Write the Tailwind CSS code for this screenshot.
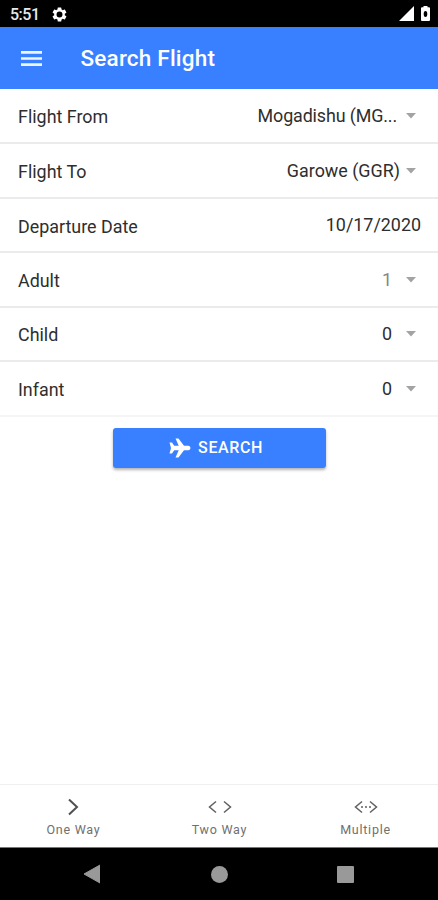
<!DOCTYPE html>
<html lang="en">
<head>
<meta charset="utf-8">
<title>Search Flight</title>
<script src="https://cdn.jsdelivr.net/npm/@tailwindcss/browser@4"></script>
</head>
<body class="bg-white font-['Roboto',sans-serif]">
<div class="flex h-[900px] w-[438px] flex-col overflow-hidden text-[#2e2e2e]">
  <div class="flex h-[27px] shrink-0 items-center bg-black pl-[10px] pr-[8px] text-white">
    <span class="w-[41px] pt-[2px] text-[16px] leading-none font-medium tracking-[-0.500px] text-[#e8e8e8]">5:51</span>
    <svg class="mt-px size-[17px]" viewBox="0 0 24 24" fill="#fff"><path d="M19.43 12.98c.04-.32.07-.64.07-.98s-.03-.66-.07-.98l2.11-1.65c.19-.15.24-.42.12-.64l-2-3.46c-.12-.22-.39-.3-.61-.22l-2.49 1c-.52-.4-1.08-.73-1.69-.98l-.38-2.65A.49.49 0 0 0 14 2h-4c-.25 0-.46.18-.49.42l-.38 2.65c-.61.25-1.17.59-1.69.98l-2.49-1c-.23-.09-.49 0-.61.22l-2 3.46c-.13.22-.07.49.12.64l2.11 1.65c-.04.32-.07.65-.07.98s.03.66.07.98l-2.11 1.65c-.19.15-.24.42-.12.64l2 3.46c.12.22.39.3.61.22l2.49-1c.52.4 1.08.73 1.69.98l.38 2.65c.03.24.24.42.49.42h4c.25 0 .46-.18.49-.42l.38-2.65c.61-.25 1.17-.59 1.69-.98l2.49 1c.23.09.49 0 .61-.22l2-3.46c.12-.22.07-.49-.12-.64l-2.11-1.65zM12 16.200a4.200 4.200 0 1 1 0-8.400 4.200 4.200 0 0 1 0 8.400z"/></svg>
    <svg class="ml-auto h-[15px] w-[15px]" viewBox="0 0 15 15" fill="#fff"><path d="M0 15 15 0v15z"/></svg>
    <svg class="ml-[7px] h-[15px] w-[9px]" viewBox="0 0 9 15" fill="#fff"><path fill-rule="evenodd" d="M2.500 0h4v1.300H8q1 0 1 1V14q0 1-1 1H1q-1 0-1-1V2.300q0-1 1-1h1.500zM4.500 5 Q2.700 5 2.700 8T4.500 11 6.300 8 4.500 5z"/></svg>
  </div>
  <header class="flex h-[62px] shrink-0 items-center bg-[#3880ff] pl-[21px]">
    <svg class="h-[15px] w-[21px]" viewBox="0 0 21 15" fill="#eef4ff"><path d="M0 0h21v2.700H0zM0 6.150h21v2.700H0zM0 12.300h21V15H0z"/></svg>
    <h1 class="ml-[38.500px] text-[22.500px] leading-none font-medium tracking-[0.200px] text-white">Search Flight</h1>
  </header>

  <main class="flex grow flex-col items-center">
    <div class="w-full divide-y-2 divide-[#ebebeb] border-b-2 border-[#f5f5f5] text-[17.900px] leading-none">
      <div class="flex h-[55px] items-center pr-[22px] pl-[18px]"><span class="pt-[2px]">Flight From</span><span class="ml-auto tracking-[-0.130px]">Mogadishu (MG...</span><svg class="ml-[9px] h-[6px] w-[10px]" viewBox="0 0 10 6" fill="#a3a3a3"><path d="M0 0h10L5 5.500z"/></svg></div>
      <div class="flex h-[55px] items-center pr-[22px] pl-[18px]"><span class="pt-[2px]">Flight To</span><span class="ml-auto">Garowe (GGR)</span><svg class="ml-[6px] h-[6px] w-[10px]" viewBox="0 0 10 6" fill="#a3a3a3"><path d="M0 0h10L5 5.500z"/></svg></div>
      <div class="flex h-[54px] items-center pr-[17px] pl-[18px]"><span class="pt-[3px]">Departure Date</span><span class="ml-auto">10/17/2020</span></div>
      <div class="flex h-[55px] items-center pr-[22px] pl-[18px]"><span class="pt-[2px]">Adult</span><span class="ml-auto text-[#858585]">1</span><svg class="ml-[14px] h-[6px] w-[10px]" viewBox="0 0 10 6" fill="#a3a3a3"><path d="M0 0h10L5 5.500z"/></svg></div>
      <div class="flex h-[54px] items-center pr-[22px] pl-[18px]"><span class="pt-[2px]">Child</span><span class="ml-auto">0</span><svg class="ml-[14px] h-[6px] w-[10px]" viewBox="0 0 10 6" fill="#a3a3a3"><path d="M0 0h10L5 5.500z"/></svg></div>
      <div class="flex h-[53px] items-center pr-[22px] pl-[18px]"><span class="pt-[3px]">Infant</span><span class="ml-auto pt-px">0</span><svg class="ml-[14px] h-[6px] w-[10px]" viewBox="0 0 10 6" fill="#a3a3a3"><path d="M0 0h10L5 5.500z"/></svg></div>
    </div>
    <button class="mt-[11px] ml-px flex h-[40px] w-[213px] items-center justify-center gap-[7px] rounded-[3px] bg-[#3880ff] pr-[7px] text-[16px] leading-none font-medium tracking-[0.600px] text-white shadow-[0_2px_3px_rgba(0,0,0,0.3)]">
      <svg class="size-[22px]" viewBox="0 0 22 22" fill="#fff"><path d="M.5 5.500h2.500L5.200 8.800h4.500L6.500 1.500h3L15 8.800H19.500Q21.500 9.300 21.500 11T19.500 13.200H15L9.500 20.500H6.500L9.700 13.200H5.200L3 16.500H.5L2 11z"/></svg>
      <span>SEARCH</span>
    </button>
  </main>

  <nav class="grid h-[63px] shrink-0 grid-cols-3 border-t border-[#efefef] pt-[12px] text-[12.500px] leading-none tracking-[0.750px] text-[#707070]">
    <div class="flex flex-col items-center gap-[7px]"><svg class="h-[20px] w-[26px]" viewBox="0 0 26 20" fill="none" stroke="#505050" stroke-width="2"><path d="M9 2.500 17 10l-8 7.500"/></svg><span class="pl-px">One Way</span></div>
    <div class="flex flex-col items-center gap-[7px]"><svg class="ml-px h-[20px] w-[26px]" viewBox="0 0 26 20" fill="none" stroke="#606060" stroke-width="1.500"><path d="M9 4.500 2.500 10 9 15.500M17 4.500l6.500 5.500-6.500 5.500"/></svg><span class="pl-px">Two Way</span></div>
    <div class="flex flex-col items-center gap-[7px]"><svg class="ml-px h-[20px] w-[26px]" viewBox="0 0 26 20" fill="none" stroke="#606060" stroke-width="1.500"><path d="M9 4.500 2.500 10 9 15.500M17 4.500l6.500 5.500-6.500 5.500M8 10h2M12 10h2M16 10h2"/></svg><span class="pl-px">Multiple</span></div>
  </nav>
  <div class="flex h-[53px] shrink-0 items-center border-t border-[#777] bg-black pl-[83px]">
    <svg class="h-[20px] w-[17px]" viewBox="0 0 17 20" fill="#999"><path d="M17 1v18L1 10z" stroke="#999" stroke-linejoin="round"/></svg>
    <div class="ml-[111px] size-[17px] rounded-full bg-[#999]"></div>
    <div class="ml-[108.500px] size-[17px] rounded-[1px] bg-[#999]"></div>
  </div>
</div>
</body>
</html>
